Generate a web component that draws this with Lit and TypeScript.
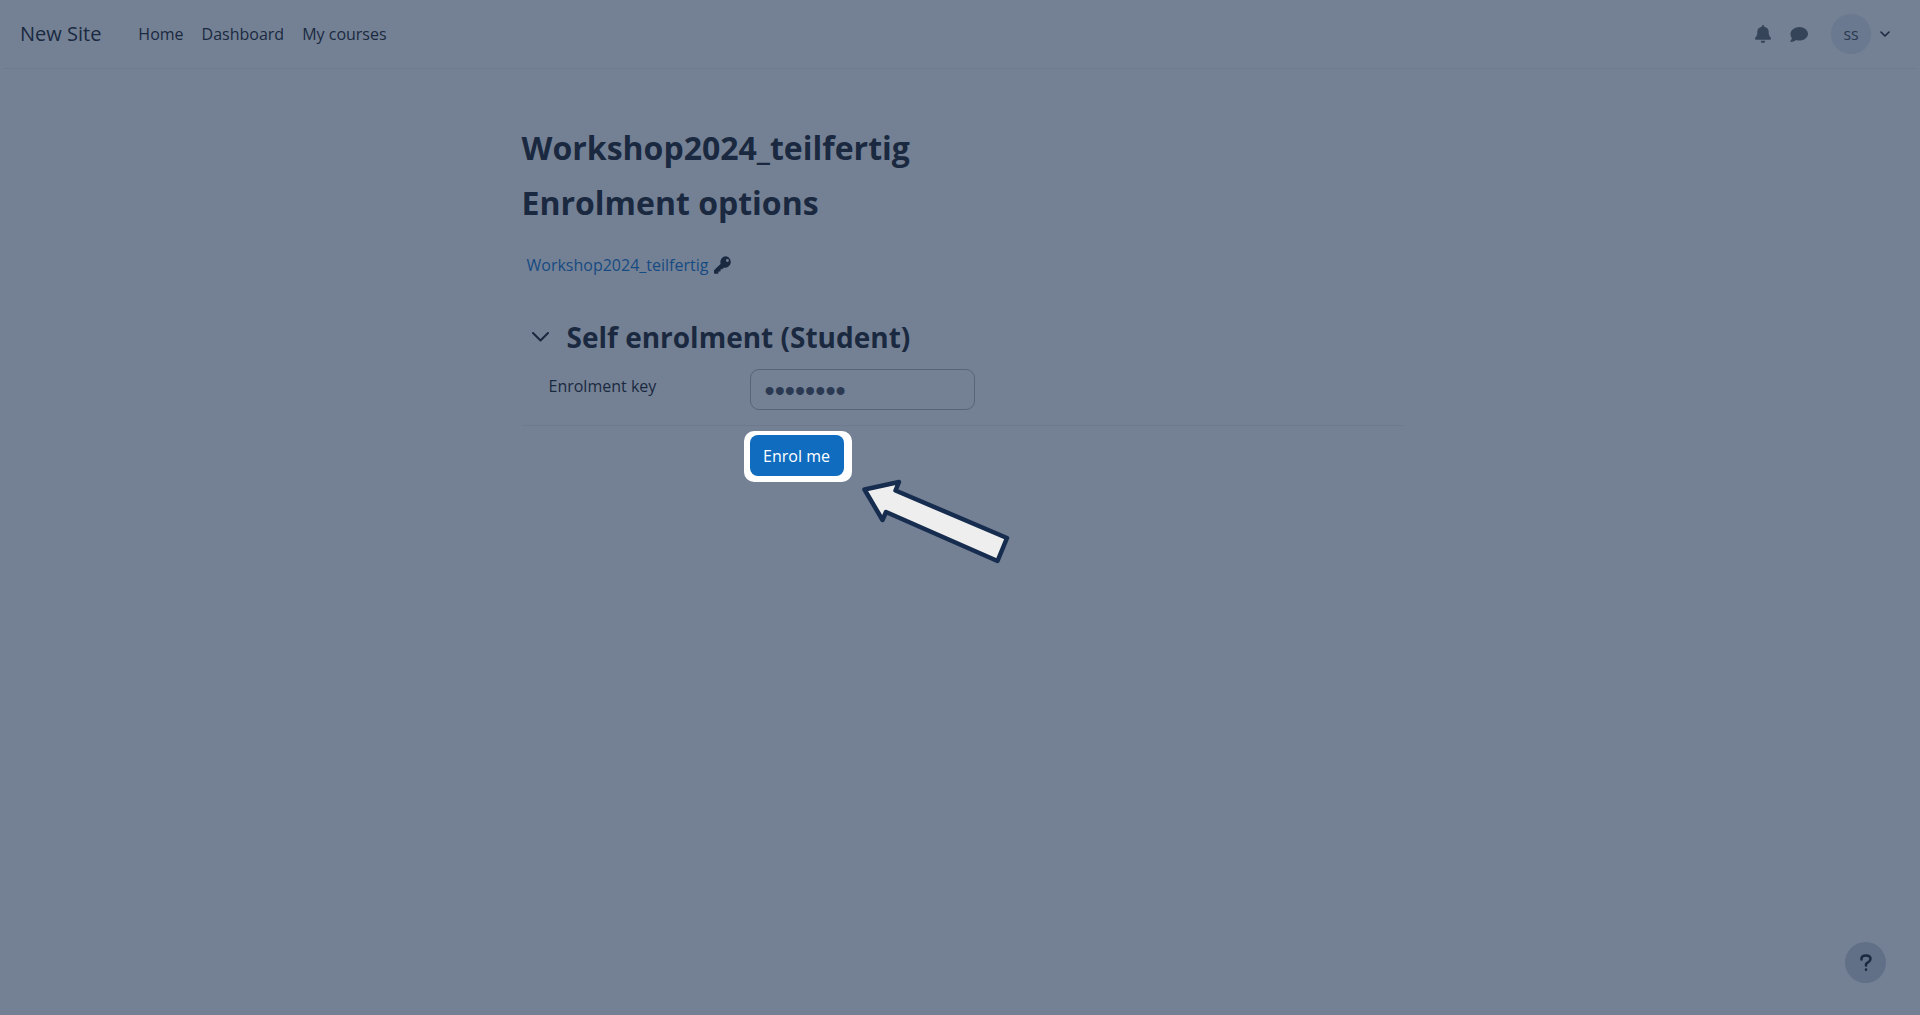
import { LitElement, html, css, svg } from "lit";
import { customElement } from "lit/decorators.js";

const bell = svg`<path d="M8 0a1 1 0 0 0-1 1v.6A5 5 0 0 0 3 6.500v.9c0 1.500-.5 2.800-1.400 3.900l-.4.500A1 1 0 0 0 2 13.500h12a1 1 0 0 0 .8-1.700l-.4-.5A6 6 0 0 1 13 7.400v-.9a5 5 0 0 0-4-4.900V1a1 1 0 0 0-1-1zM10 14.500H6a2 2 0 0 0 4 0z"/>`;
const comment = svg`<path d="M9.500 1C14 1 18 4 18 7.800s-4 6.800-8.500 6.800c-1.200 0-2.400-.2-3.400-.6C5 14.900 3.200 16 .8 16c-.5 0-.7-.6-.4-.9.500-.6 1.200-1.700 1.500-3C1 11 .5 9.500.5 7.800.5 4 5 1 9.500 1z"/>`;
const key = svg`<path d="M12.400 0a6 6 0 0 0-5.700 7.900L.3 14.200a1 1 0 0 0-.3.600V17.200c0 .5.300.8.800.8h2.900c.5 0 .8-.3.800-.8V15.700H6c.5 0 .8-.3.800-.8v-1.500h1.200c.2 0 .4-.1.600-.3l1.400-1.300A6 6 0 1 0 12.400 0zm1.400 2.800a1.500 1.500 0 1 1 0 3 1.500 1.500 0 0 1 0-3z"/>`;

@customElement("app-root")
export class AppRoot extends LitElement {
  static styles = css`
    :host {
      display: flex;
      flex-direction: column;
      min-height: 100vh;
      box-sizing: border-box;
      background: #748194;
      color: #1a2940;
      font: 16px/24px "Open Sans", "Noto Sans", sans-serif;
    }
    * { box-sizing: border-box; }
    a { color: inherit; text-decoration: none; }
    button { font: inherit; color: inherit; border: 0; background: none; padding: 0; cursor: pointer; }
    h1, h2, h3 { margin: 0; font-weight: 700; }
    svg { display: block; fill: currentColor; }
    .bar {
      display: flex;
      align-items: center;
      height: 69px;
      margin: 0 3px;
      padding: 0 27px 0 17px;
      border-bottom: 1px solid #6d7a8e;
    }
    .brand { font-size: 20px; line-height: 30px; margin-right: 37px; }
    .links { display: flex; gap: 18px; flex: 1; }
    .tools { display: flex; align-items: center; color: #36445a; }
    .bell { margin-right: 19px; }
    .comment { margin-right: 22px; }
    .user { display: flex; align-items: center; gap: 9px; color: #1a2940; }
    .avatar {
      display: grid;
      place-items: center;
      width: 40px;
      height: 40px;
      border-radius: 50%;
      background: #6a798f;
      color: #2a394f;
    }
    .line { fill: none; stroke: currentColor; stroke-linecap: round; stroke-linejoin: round; }
    main { width: 100%; max-width: 885px; margin: 0 auto; padding: 57px 0 0 4px; }
    h1, h2 { font-size: 32px; line-height: 44px; }
    h2 { margin-top: 11px; }
    .course { display: flex; align-items: center; gap: 6px; margin: 28px 0 0 5px; }
    .course a { color: #164a82; }
    .section { display: flex; align-items: center; gap: 17px; margin: 40px 0 0 9px; }
    .section button { padding: 0 1px; }
    h3 { font-size: 28px; line-height: 40px; }
    .row { display: grid; grid-template-columns: 201px 225px; padding: 12px 0 15px 27px; }
    .row label { padding-top: 5px; }
    .row input {
      width: 100%;
      height: 41px;
      padding: 3px 14px 0;
      border: 1px solid #56647a;
      border-radius: 9px;
      background: transparent;
      color: #2b3a52;
      font: 29px "Liberation Sans", sans-serif;
      outline: 0;
    }
    .actions { border-top: 1px solid #6d7a8e; padding: 5px 0 0 222px; display: flex; }
    .spot { position: relative; padding: 4px 8px 6px 6px; background: #fff; border-radius: 10px; }
    .enrol { width: 94px; height: 41px; border-radius: 8px; background: #0f6cbf; color: #fff; }
    .arrow { position: absolute; left: 116px; top: 46px; }
    .help {
      position: fixed;
      right: 34px;
      bottom: 32px;
      width: 41px;
      height: 41px;
      border-radius: 50%;
      background: #617087;
      display: grid;
      place-items: center;
    }
  `;

  render() {
    return html`
      <header class="bar">
        <a class="brand" href="#">New Site</a>
        <nav class="links">
          <a href="#">Home</a><a href="#">Dashboard</a><a href="#">My courses</a>
        </nav>
        <div class="tools">
          <button class="bell" aria-label="Notifications"><svg width="16" height="18" viewBox="1 0 14 16.500" preserveAspectRatio="none">${bell}</svg></button>
          <button class="comment" aria-label="Messages"><svg width="19" height="17" viewBox="0 0 19 17">${comment}</svg></button>
          <button class="user" aria-label="User menu">
            <span class="avatar">ss</span>
            <svg class="line" width="10" height="6" viewBox="0 0 10 6" stroke-width="1.600"><path d="M1 1l4 4 4-4"/></svg>
          </button>
        </div>
      </header>
      <main>
        <h1>Workshop2024_teilfertig</h1>
        <h2>Enrolment options</h2>
        <div class="course">
          <a href="#">Workshop2024_teilfertig</a>
          <svg width="18" height="18" viewBox="0 0 18.500 18">${key}</svg>
        </div>
        <form @submit=${(e: Event) => e.preventDefault()}>
          <div class="section">
            <button type="button" aria-label="Collapse"><svg class="line" width="17" height="10" viewBox="0 0 17 10" stroke-width="2"><path d="M1 1l7.500 7.500L16 1"/></svg></button>
            <h3>Self enrolment (Student)</h3>
          </div>
          <div class="row">
            <label for="key">Enrolment key</label>
            <input id="key" type="password" value="password" />
          </div>
          <div class="actions">
            <div class="spot">
              <button class="enrol" type="submit">Enrol me</button>
              <svg class="arrow" width="154" height="92" viewBox="0 0 154 92">
                <path d="M4.500 12.500L39 5l-3.500 8.500L147 61l-9.500 23L26 35l-3.500 8z" fill="#eee" stroke="#172d4f" stroke-width="4.500" stroke-linejoin="round"/>
              </svg>
            </div>
          </div>
        </form>
      </main>
      <button class="help" aria-label="Help">
        <svg class="line" width="12" height="18" viewBox="0 0 12 18" stroke-width="2.500"><path d="M1.500 5.500V4.800Q1.500 1.500 6 1.500T10.500 5Q10.500 7 8 8.300T6 11.500M6 15.500v.2"/></svg>
      </button>
    `;
  }
}
